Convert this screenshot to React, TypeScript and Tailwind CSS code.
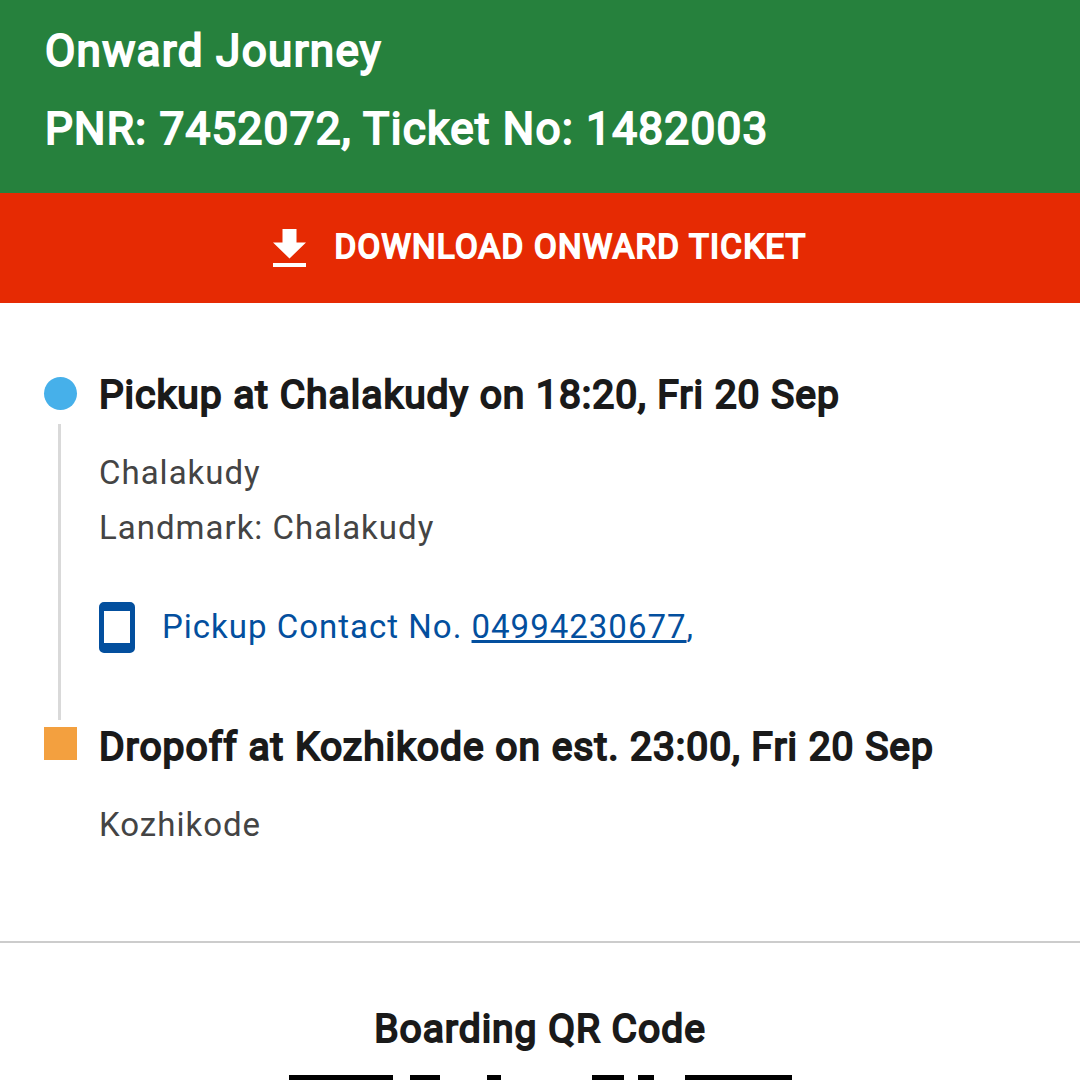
const headingBold = "font-normal [-webkit-text-stroke:2px_currentColor]";

function DownloadIcon() {
  return (
    <svg viewBox="0 0 33 38" className="h-[38px] w-[33px] shrink-0 fill-white" aria-hidden="true">
      <path d="M9.5 0h14v13.5H33L16.5 29.5 0 13.5h9.5zM0 34h33v4H0z" />
    </svg>
  );
}

function PhoneIcon() {
  return (
    <svg viewBox="0 0 36 51" className="h-[51px] w-9 shrink-0 fill-[#034f9e]" aria-hidden="true">
      <path fillRule="evenodd" d="M5 0h26a5 5 0 0 1 5 5v41a5 5 0 0 1-5 5H5a5 5 0 0 1-5-5V5a5 5 0 0 1 5-5zm0 9v32h26V9z" />
    </svg>
  );
}

const qrTopRow = [
  [0, 104],
  [121, 30],
  [198, 14],
  [303, 32],
  [349, 16],
  [396, 107],
];

export default function App() {
  return (
    <main className="bg-white font-['Roboto',sans-serif] text-[#1a1a1a]">
      <header className={`bg-[#26813d] px-[45px] pt-3 pb-[25px] text-[44px] leading-[78px] tracking-[0.03em] text-white ${headingBold}`}>
        <h1>Onward Journey</h1>
        <p>PNR: 7452072, Ticket No: 1482003</p>
      </header>

      <button
        type="button"
        className={`flex h-[110px] w-full items-center justify-center gap-7 bg-[#e62a03] text-[33px] leading-none tracking-[0.04em] text-white ${headingBold}`}
      >
        <DownloadIcon />
        <span className="pb-1">DOWNLOAD ONWARD TICKET</span>
      </button>

      <section className="border-b-2 border-[#cccccc] px-11 pt-[65px] pb-[89px]">
        <div className="flex gap-[22px]">
          <div className="flex w-[33px] shrink-0 flex-col items-start pt-[9px]">
            <span className="size-[33px] rounded-full bg-[#46b0ea]" />
            <span className="mt-[14px] ml-[14px] w-[3px] grow bg-[#d9d9d9]" />
          </div>
          <div>
            <h2 className={`text-[39px] leading-[55px] tracking-wide ${headingBold}`}>
              Pickup at Chalakudy on 18:20, Fri 20 Sep
            </h2>
            <div className="pt-[22px] text-[33px] leading-[55px] tracking-[1px] text-[#444444]">
              <p>Chalakudy</p>
              <p>Landmark: Chalakudy</p>
            </div>
            <div className="flex items-center gap-[27px] pt-11 pb-16 text-[33px] leading-[55px] tracking-[1px] text-[#034f9e]">
              <PhoneIcon />
              <p className="pb-0.5">
                Pickup Contact No.{" "}
                <a href="tel:04994230677" className="underline decoration-[3px]">04994230677</a>,
              </p>
            </div>
          </div>
        </div>
        <div className="flex gap-[22px]">
          <span className="mt-[7px] size-[33px] shrink-0 bg-[#f3a03f]" />
          <div>
            <h2 className={`text-[39px] leading-[55px] tracking-wide ${headingBold}`}>
              Dropoff at Kozhikode on est. 23:00, Fri 20 Sep
            </h2>
            <p className="pt-[22px] text-[33px] leading-[55px] tracking-[1px] text-[#444444]">Kozhikode</p>
          </div>
        </div>
      </section>

      <section className="flex flex-col items-center pt-[59px]">
        <h2 className={`mb-[18px] text-[39px] leading-[55px] tracking-wide ${headingBold}`}>Boarding QR Code</h2>
        <svg viewBox="0 0 503 5" className="h-[5px] w-[503px] fill-black" role="img" aria-label="Boarding QR code">
          {qrTopRow.map(([x, width]) => (
            <rect key={x} x={x} width={width} height="5" />
          ))}
        </svg>
      </section>
    </main>
  );
}
